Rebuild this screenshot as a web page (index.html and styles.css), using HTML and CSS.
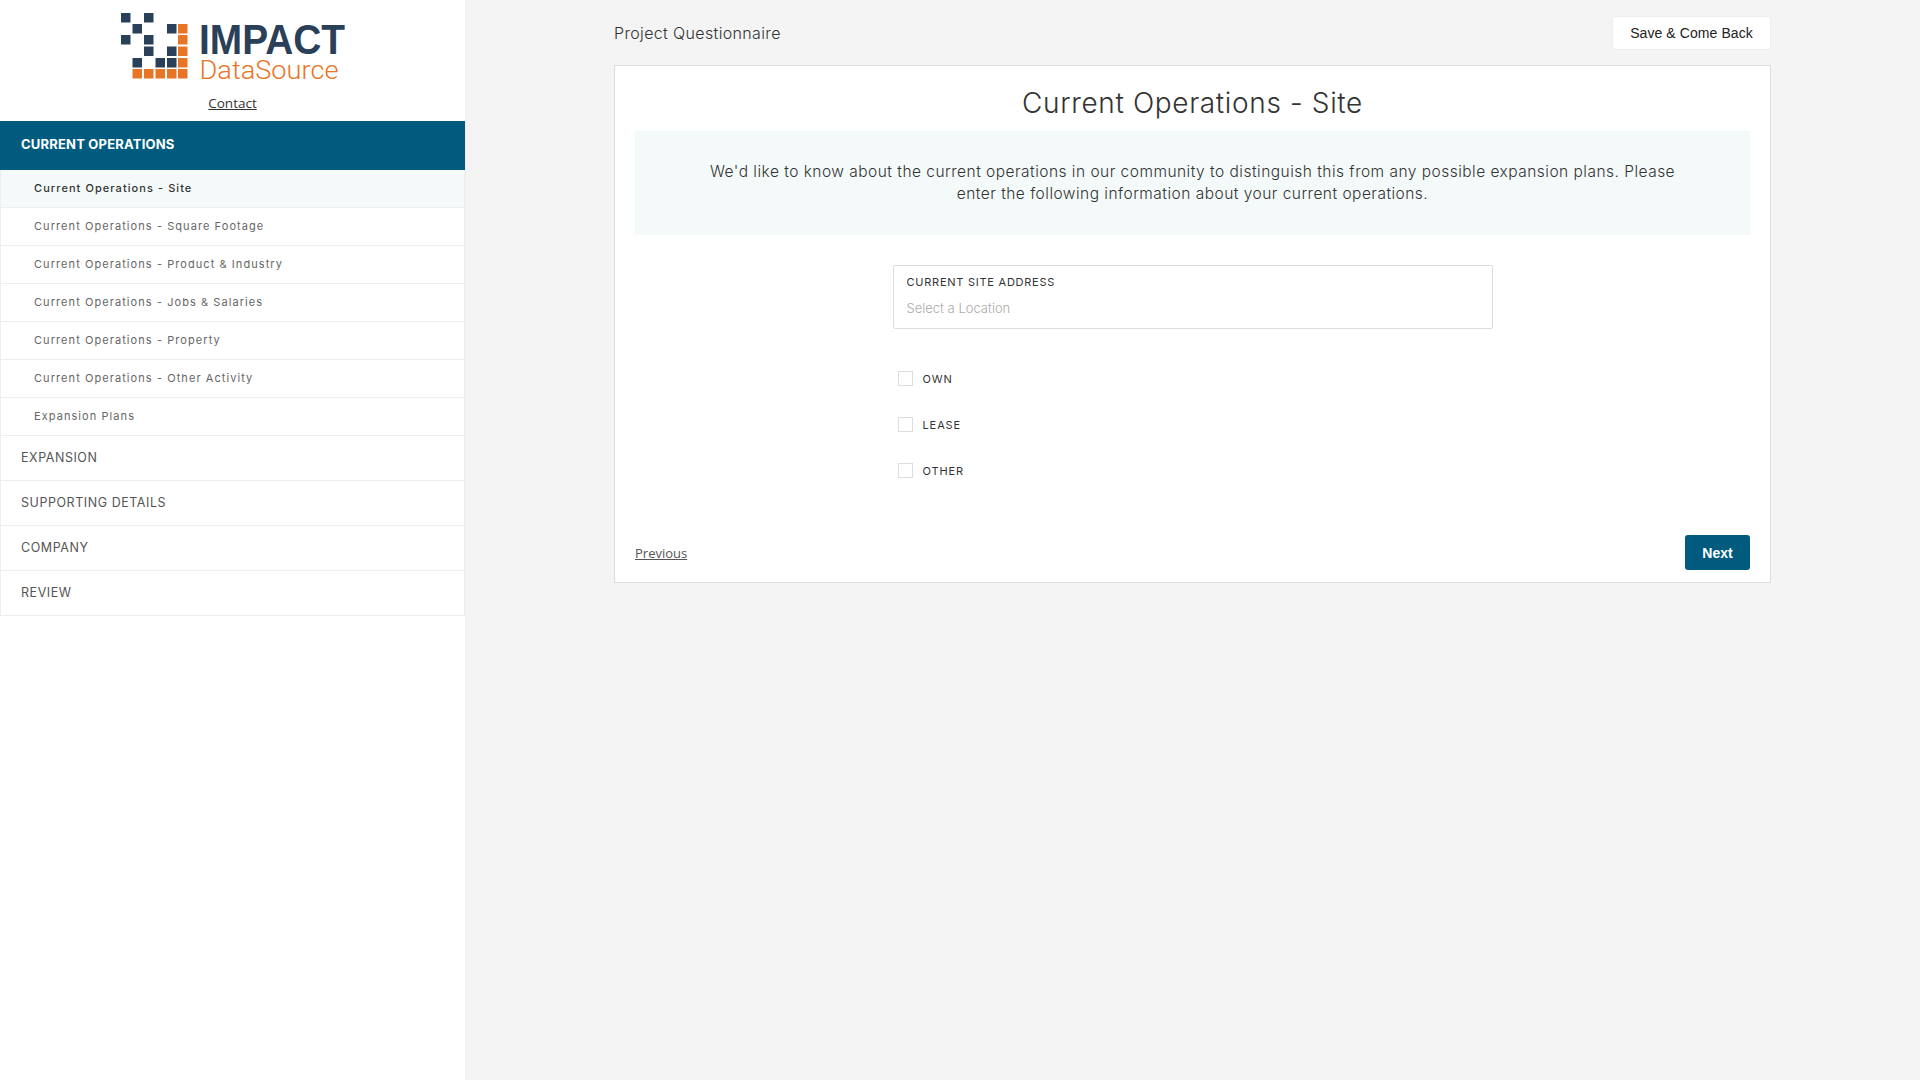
FILE: index.html
```html
<!DOCTYPE html>
<html lang="en">
<head>
<meta charset="utf-8">
<title>Project Questionnaire</title>
<link rel="stylesheet" href="styles.css">
</head>
<body>
<aside class="sidebar">
  <div class="brand">
    <svg class="logo" width="236" height="70" viewBox="0 0 236 70" xmlns="http://www.w3.org/2000/svg">
      <g fill="#2a4058">
        <rect x="0" y="0" width="9.5" height="9.5"/><rect x="23" y="0" width="9.5" height="9.5"/>
        <rect x="11.5" y="11" width="9.5" height="9.5"/><rect x="46" y="11" width="9.5" height="9.5"/>
        <rect x="0" y="22" width="9.5" height="9.5"/><rect x="23" y="22" width="9.5" height="9.5"/>
        <rect x="23" y="33.5" width="9.5" height="9.5"/><rect x="46" y="33.5" width="9.5" height="9.5"/>
        <rect x="11.5" y="45" width="9.5" height="9.5"/><rect x="34.5" y="45" width="9.5" height="9.5"/><rect x="46" y="45" width="9.5" height="9.5"/>
      </g>
      <g fill="#e87425">
        <rect x="57" y="11" width="9.5" height="9.5"/><rect x="57" y="22" width="9.5" height="9.5"/>
        <rect x="57" y="33.5" width="9.5" height="9.5"/><rect x="57" y="45" width="9.5" height="9.5"/>
        <rect x="11.5" y="56" width="9.5" height="9.5"/><rect x="23" y="56" width="9.5" height="9.5"/><rect x="34.5" y="56" width="9.5" height="9.5"/><rect x="46" y="56" width="9.5" height="9.5"/><rect x="57" y="56" width="9.5" height="9.5"/>
      </g>
      <text class="logo-impact" x="78" y="41" textLength="146" lengthAdjust="spacingAndGlyphs">IMPACT</text>
      <text class="logo-source" x="78.5" y="66" textLength="139" lengthAdjust="spacingAndGlyphs">DataSource</text>
    </svg>
    <a class="contact" href="#">Contact</a>
  </div>
  <nav class="nav">
    <div class="nav-head">CURRENT OPERATIONS</div>
    <a class="nav-sub is-active" href="#">Current Operations - Site</a>
    <a class="nav-sub" href="#">Current Operations - Square Footage</a>
    <a class="nav-sub" href="#">Current Operations - Product &amp; Industry</a>
    <a class="nav-sub" href="#">Current Operations - Jobs &amp; Salaries</a>
    <a class="nav-sub" href="#">Current Operations - Property</a>
    <a class="nav-sub" href="#">Current Operations - Other Activity</a>
    <a class="nav-sub" href="#">Expansion Plans</a>
    <a class="nav-section" href="#">EXPANSION</a>
    <a class="nav-section" href="#">SUPPORTING DETAILS</a>
    <a class="nav-section" href="#">COMPANY</a>
    <a class="nav-section" href="#">REVIEW</a>
  </nav>
</aside>
<main class="main">
  <div class="toolbar">
    <div class="page-name">Project Questionnaire</div>
    <button class="btn-save" type="button">Save &amp; Come Back</button>
  </div>
  <section class="card">
    <h1 class="card-title">Current Operations - Site</h1>
    <p class="info">We'd like to know about the current operations in our community to distinguish this from any possible expansion plans. Please<br>enter the following information about your current operations.</p>
    <div class="form">
      <label class="field">
        <span class="field-label">CURRENT SITE ADDRESS</span>
        <span class="field-input">Select a Location</span>
      </label>
      <div class="checks">
        <div class="check"><span class="box"></span><span class="check-label">OWN</span></div>
        <div class="check"><span class="box"></span><span class="check-label">LEASE</span></div>
        <div class="check"><span class="box"></span><span class="check-label">OTHER</span></div>
      </div>
    </div>
    <div class="card-foot">
      <a class="prev" href="#">Previous</a>
      <button class="btn-next" type="button">Next</button>
    </div>
  </section>
</main>
</body>
</html>
```
FILE: styles.css
```css
* { box-sizing: border-box; }
html, body { margin: 0; height: 100%; }
body {
  display: flex;
  min-height: 1080px;
  background: #f4f4f4;
  color: #333;
  font-family: Inter, "Noto Sans", sans-serif;
  overflow: hidden;
}
a { color: inherit; text-decoration: none; }

.sidebar { width: 466px; flex: none; background: #fff; border-right: 1px solid #f0f0f0; }
.brand { height: 121px; display: flex; flex-direction: column; align-items: center; }
.logo { display: block; margin: 13px 0 0 12px; flex: none; }
.logo-impact { font: 700 42px "Liberation Sans", sans-serif; fill: #2a4058; }
.logo-source { font: 300 25px Roboto, sans-serif; fill: #e87425; }
.contact { margin-top: 11px; font: 13.5px/18px "Open Sans", sans-serif; color: #333; text-decoration: underline; }

.nav { display: flex; flex-direction: column; }
.nav-head {
  height: 49px; line-height: 47px; padding-left: 21px;
  background: #005b7f; color: #fff;
  font-size: 13px; font-weight: 700; letter-spacing: .2px;
}
.nav-sub {
  height: 38px; line-height: 36px; padding-left: 33px;
  font-size: 11px; letter-spacing: 1.07px; color: #666;
  border: 1px solid #eee; border-width: 0 1px 1px 1px;
}
.nav-sub.is-active { background: #f4fafa; color: #333; font-weight: 500; }
.nav-section {
  height: 45px; line-height: 43px; padding-left: 20px;
  font-size: 12.5px; font-weight: 400; letter-spacing: .55px; color: #555;
  border: 1px solid #eee; border-width: 0 1px 1px 1px;
}

.main { flex: 1; padding: 16px 149px 0 148px; }
.toolbar { height: 49px; display: flex; justify-content: space-between; align-items: flex-start; }
.page-name { margin-top: 7px; font-size: 16px; line-height: 20px; font-weight: 300; letter-spacing: .35px; color: #333; }
.btn-save {
  width: 159px; height: 34px;
  background: #fff; border: 1px solid #eee; border-radius: 3px;
  font: 14px "Liberation Sans", sans-serif; letter-spacing: .08px; color: #222;
}

.card { height: 518px; background: #fff; border: 1px solid #ddd; padding: 0 20px; display: flex; flex-direction: column; }
.card-title { margin: 0; height: 65px; padding-top: 19px; text-align: center; font-size: 28px; line-height: 36px; font-weight: 300; letter-spacing: .64px; color: #333; }
.info {
  margin: 0; height: 104px; padding-top: 30px; background: #f4fafa;
  text-align: center; font-size: 15.5px; line-height: 22px; font-weight: 300; letter-spacing: .48px; color: #333; white-space: nowrap;
}
.form { width: 600px; margin: 30px auto 0; }
.field { display: block; height: 64px; border: 1px solid #ddd; border-radius: 2px; padding: 9px 13px; }
.field-label { display: block; font-size: 11px; line-height: 14px; font-weight: 400; letter-spacing: .75px; color: #333; }
.field-input { display: block; margin-top: 11px; font-size: 13px; line-height: 16px; font-weight: 300; color: #aaa; }

.checks { margin-top: 42px; padding-left: 5px; display: flex; flex-direction: column; gap: 31px; }
.check { display: flex; align-items: center; gap: 10px; height: 15px; }
.box { width: 15px; height: 15px; border: 1px solid #ddd; }
.check-label { font-size: 11px; font-weight: 400; letter-spacing: .9px; color: #333; }

.card-foot { margin-top: auto; padding-bottom: 12px; display: flex; justify-content: space-between; align-items: center; }
.prev { font: 13px "Open Sans", sans-serif; color: #555; text-decoration: underline; }
.btn-next {
  width: 65px; height: 35px; background: #005b7f; border: 0; border-radius: 3px;
  color: #fff; font: 700 14px "Liberation Sans", sans-serif;
}
```
